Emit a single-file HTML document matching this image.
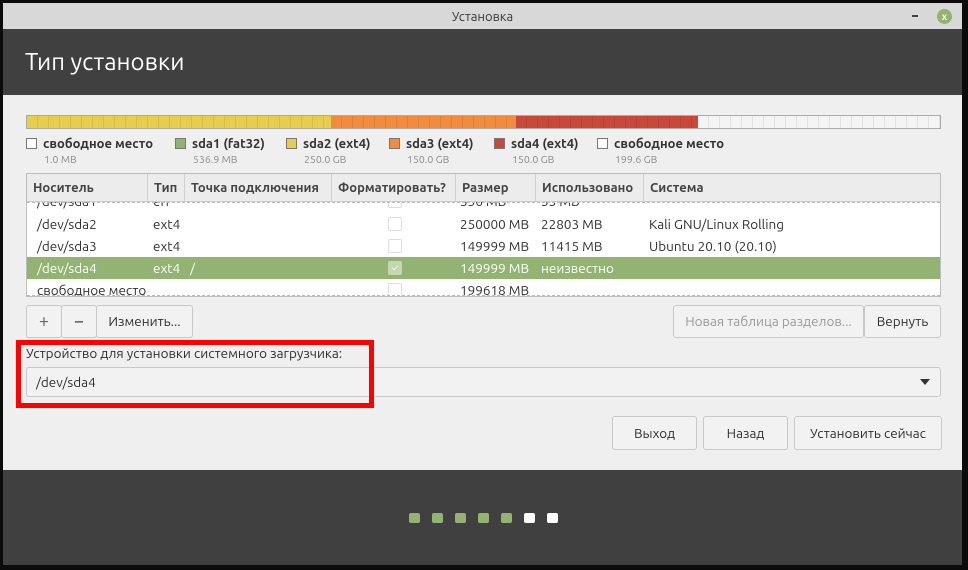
<!DOCTYPE html><html><head><meta charset="utf-8"><style>
*{box-sizing:border-box;margin:0;padding:0}
body{width:968px;height:570px;background:#0b0b0b;font-family:"Ubuntu","Liberation Sans","DejaVu Sans",sans-serif;font-size:13px;color:#303030;position:relative;overflow:hidden}
.a{position:absolute}
.win{left:3px;top:3px;width:959px;height:562px;background:#404040}
.tb{left:3px;top:3px;width:959px;height:26px;background:#d8d8d8;text-align:center;line-height:28px;font-size:13px;color:#3a3a3a}
.hd{left:3px;top:29px;width:959px;height:66px;background:#404040;color:#fff;font-size:24px;padding:19px 0 0 22px}
.ct{left:3px;top:95px;width:959px;height:375px;background:#efefef}
.bar{left:26px;top:115px;width:915px;height:14px;border:1px solid #aaa;display:flex;
}
.seg{height:100%;background-image:repeating-linear-gradient(90deg,transparent 0 10px,rgba(0,0,0,.08) 10px 11px)}
.lg{top:137px;font-size:13px;font-weight:bold;color:#333}
.lg i{display:inline-block;width:11px;height:11px;border:1px solid #777;vertical-align:-1px;margin-right:6px}
.sz{top:153px;font-size:10.5px;color:#8a8a8a}
.tbl{left:26px;top:173px;width:915px;height:124px;background:#fff;border:1px solid #bdbdbd}
.th{left:0;top:0;width:913px;height:28px;background:#ececec;border-bottom:1px solid #ccc;font-weight:bold;font-size:13px;color:#444}
.th div{position:absolute;top:0;height:28px;line-height:28px;padding-left:6px;border-right:1px solid #d0d0d0}
.row{left:0;width:913px;height:22px;line-height:22px;font-size:13.5px}
.row span{position:absolute}
.cb{position:absolute;left:361px;top:4px;width:14px;height:14px;border:1px solid #ddd;border-radius:2px;background:#fff}
.btn{position:absolute;background:#f2f2f2;border:1px solid #c8c8c8;border-radius:3px;text-align:center;font-size:13.5px;color:#303030}
.dot{position:absolute;top:513px;width:11px;height:10px;border-radius:2px;background:#92b372}
</style></head><body>
<div class="a win"></div>
<div class="a tb">Установка</div>
<div class="a" style="left:912px;top:15px;width:6px;height:2px;background:#444"></div>
<div class="a" style="left:937px;top:9px;width:15px;height:15px;border-radius:50%;background:#92b372;color:#fff;font-size:10px;line-height:15px;text-align:center;font-weight:bold">x</div>
<div class="a hd">Тип установки</div>
<div class="a ct"></div>
<div class="a bar"><div class="seg" style="width:304px;background-color:#e6cd4c"></div><div class="seg" style="width:185px;background-color:#f28c3c"></div><div class="seg" style="width:182px;background-color:#c9483a"></div><div class="seg" style="flex:1;background-color:#f4f4f4"></div></div>
<div class="a lg" style="left:26px"><i style="background:#fff"></i>свободное место</div>
<div class="a lg" style="left:175px"><i style="background:#92b372"></i>sda1 (fat32)</div>
<div class="a lg" style="left:286px"><i style="background:#e6cd4c"></i>sda2 (ext4)</div>
<div class="a lg" style="left:389px"><i style="background:#f28c3c"></i>sda3 (ext4)</div>
<div class="a lg" style="left:494px"><i style="background:#c9483a"></i>sda4 (ext4)</div>
<div class="a lg" style="left:597px"><i style="background:#fff"></i>свободное место</div>
<div class="a sz" style="left:44px">1.0 MB</div><div class="a sz" style="left:193px">536.9 MB</div><div class="a sz" style="left:304px">250.0 GB</div><div class="a sz" style="left:407px">150.0 GB</div><div class="a sz" style="left:512px">150.0 GB</div><div class="a sz" style="left:615px">199.6 GB</div>
<div class="a tbl">
<div class="a" style="left:0;top:28px;width:913px;height:94px;overflow:hidden">
<div class="a row" style="top:-12px"><span style="left:10px">/dev/sda1</span><span style="left:126px">efi</span><div class="cb"></div><span style="left:433px">536 MB</span><span style="left:514px">35 MB</span></div>
<div class="a row" style="top:11px"><span style="left:10px">/dev/sda2</span><span style="left:126px">ext4</span><div class="cb"></div><span style="left:433px">250000 MB</span><span style="left:514px">22803 MB</span><span style="left:622px">Kali GNU/Linux Rolling</span></div>
<div class="a row" style="top:33px"><span style="left:10px">/dev/sda3</span><span style="left:126px">ext4</span><div class="cb"></div><span style="left:433px">149999 MB</span><span style="left:514px">11415 MB</span><span style="left:622px">Ubuntu 20.10 (20.10)</span></div>
<div class="a row" style="top:55px;background:#92b372;color:#fff"><span style="left:10px">/dev/sda4</span><span style="left:126px">ext4</span><span style="left:163px">/</span><div class="cb" style="background:#c4d7b2;border-color:#c4d7b2;color:#fff;font-size:10px;line-height:12px;text-align:center">✓</div><span style="left:433px">149999 MB</span><span style="left:514px">неизвестно</span></div>
<div class="a row" style="top:77px"><span style="left:10px">свободное место</span><div class="cb"></div><span style="left:433px">199618 MB</span></div>
<div class="a" style="left:0;top:0;width:913px;border-top:1px dashed #bbb"></div>
<div class="a" style="left:0;top:93px;width:913px;border-top:1px dashed #bbb"></div>
</div>
<div class="a th">
<div style="left:0;width:121px">Носитель</div><div style="left:121px;width:37px">Тип</div><div style="left:158px;width:147px">Точка подключения</div><div style="left:305px;width:124px">Форматировать?</div><div style="left:429px;width:80px">Размер</div><div style="left:509px;width:108px">Использовано</div><div style="left:617px;width:296px;border:none">Система</div>
</div>
</div>
<div class="btn" style="left:26px;top:305px;width:36px;height:33px;line-height:31px;font-size:18px;color:#666">+</div>
<div class="btn" style="left:61px;top:305px;width:36px;height:33px;line-height:31px;font-size:18px">−</div>
<div class="btn" style="left:96px;top:305px;width:97px;height:33px;line-height:31px">Изменить...</div>
<div class="btn" style="left:673px;top:305px;width:191px;height:33px;line-height:31px;color:#999">Новая таблица разделов...</div>
<div class="btn" style="left:864px;top:305px;width:77px;height:33px;line-height:31px">Вернуть</div>
<div class="a" style="left:26px;top:345px;font-size:13.5px">Устройство для установки системного загрузчика:</div>
<div class="btn" style="left:26px;top:367px;width:915px;height:30px;line-height:28px;text-align:left;padding-left:9px">/dev/sda4</div>
<div class="a" style="left:920px;top:379px;width:0;height:0;border-left:5px solid transparent;border-right:5px solid transparent;border-top:6px solid #333"></div>
<div class="a" style="left:16px;top:340px;width:358px;height:68px;border:5px solid #f00"></div>
<div class="btn" style="left:612px;top:416px;width:85px;height:34px;line-height:32px">Выход</div>
<div class="btn" style="left:703px;top:416px;width:85px;height:34px;line-height:32px">Назад</div>
<div class="btn" style="left:794px;top:416px;width:148px;height:34px;line-height:32px">Установить сейчас</div>
<div class="dot" style="left:409px"></div><div class="dot" style="left:432px"></div><div class="dot" style="left:455px"></div><div class="dot" style="left:478px"></div><div class="dot" style="left:501px"></div><div class="dot" style="left:524px;background:#fff"></div><div class="dot" style="left:547px;background:#fff"></div>
</body></html>
